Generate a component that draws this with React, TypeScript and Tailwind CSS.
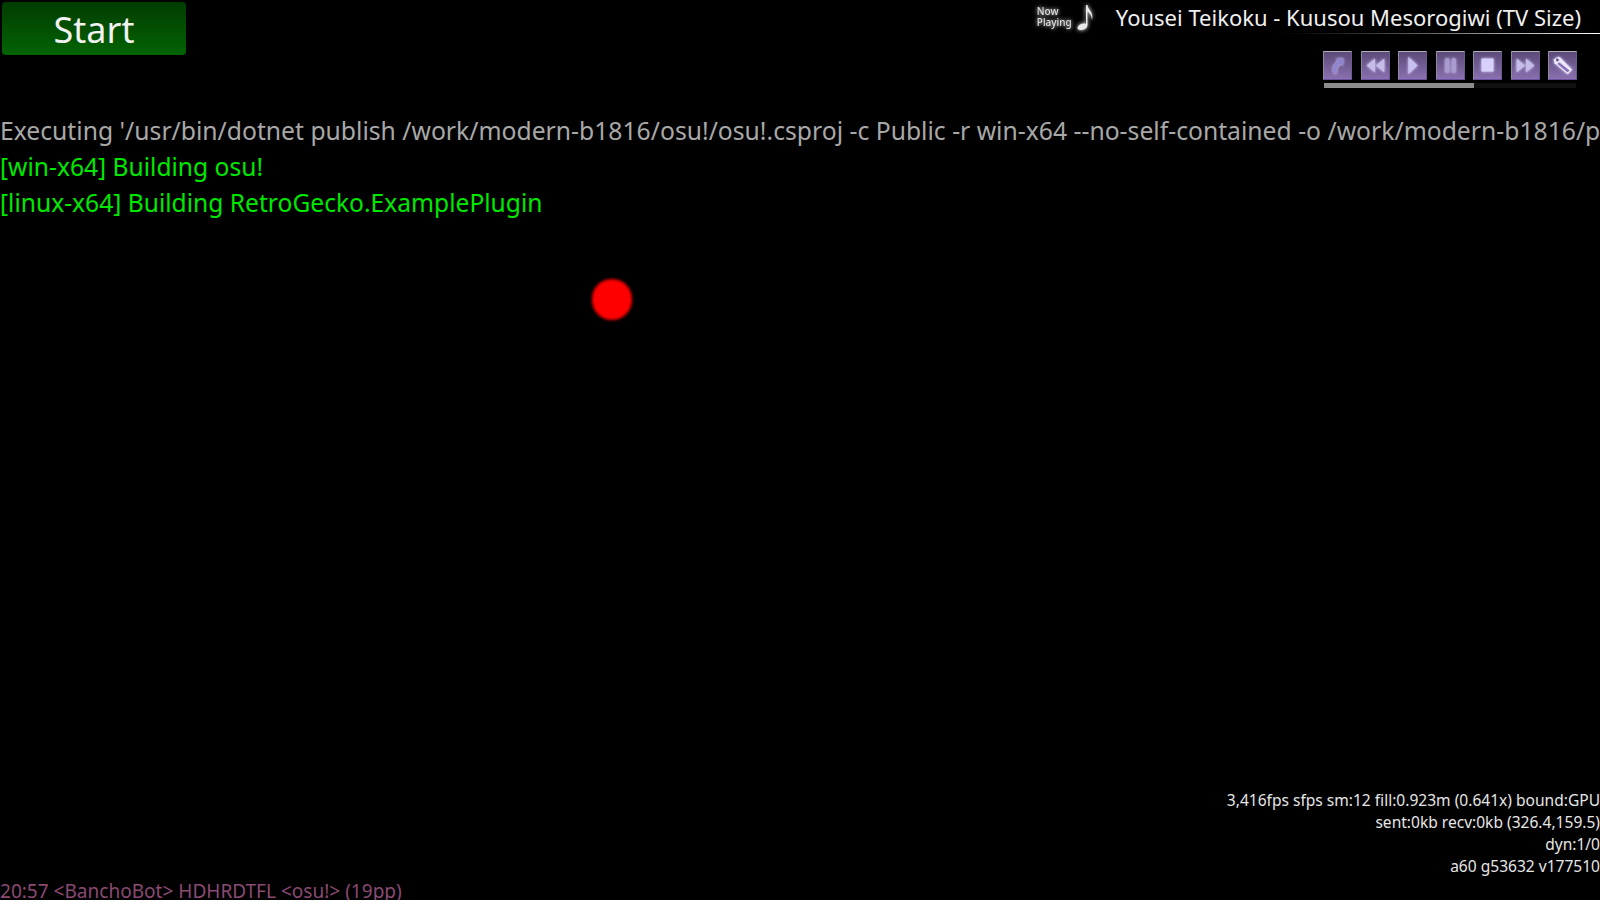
const font = { fontFamily: '"Noto Sans", sans-serif' };

function PlayerButton({ children }: { children: React.ReactNode }) {
  return (
    <div className="relative flex h-[29px] w-[29px] items-center justify-center rounded-[1px] border-t border-l border-t-[#b5b0bd] border-l-[#8f8a9c] border-b border-r border-b-[#6a4fa0] border-r-[#6a5a90] bg-gradient-to-b from-[#5b4a78] to-[#8a70b0]">
      <svg viewBox="0 0 29 29" className="h-[29px] w-[29px] blur-[0.7px] drop-shadow-[0_0_1.5px_#d8d2fb]">
        {children}
      </svg>
    </div>
  );
}

function NowPlaying() {
  return (
    <div className="flex items-center gap-[3px] mr-[21px]">
      <div className="flex flex-col text-[10px] leading-[11px] font-medium text-[#dcdcdc] blur-[0.4px] [text-shadow:0_0_4px_#ffffff]">
        <span>Now</span>
        <span>Playing</span>
      </div>
      <svg viewBox="0 0 20 28" className="h-[28px] w-[20px] blur-[0.4px] drop-shadow-[0_0_2px_#ffffff]">
        <path d="M11 2 L12.5 2 C13 7 19 9 17 17 C16.5 12 14.5 10 12.5 8.5 L12.5 22 C12.5 25 9 27 5.5 27 C2 27 2 24.5 3.5 23 C6 20.5 9 20 11 21 Z" fill="#e8e8e8" />
      </svg>
    </div>
  );
}

export default function App() {
  return (
    <div style={font} className="flex h-[900px] w-[1600px] flex-col overflow-hidden bg-black">
      <header className="flex h-[113px] shrink-0 items-start justify-between">
        <button className="mt-[2px] ml-[2px] flex h-[53px] w-[184px] items-center justify-center rounded-[4px] bg-gradient-to-b from-[#023c02] to-[#036403] pt-[3px] text-[36px] text-[#f2f2f2]">
          Start
        </button>

        <div className="flex w-[600px] flex-col items-end">
          <div className="flex h-[33px] items-center pr-[19px]">
            <NowPlaying />
            <span className="whitespace-nowrap text-[22px] leading-[30px] text-[#f0f0f0]">
              Yousei Teikoku - Kuusou Mesorogiwi (TV Size)
            </span>
          </div>
          <div className="h-[1px] w-[350px] bg-gradient-to-r from-[#000000] to-[#ffffff]" />

          <div className="mt-[17px] mr-[23px] flex gap-[8.5px]">
            <PlayerButton>
              <path d="M11 23 C8 18 10 13 15 10 L13 7 L21 7 L20 15 L18 12.5 C14 14 13 18 14 23 Z" fill="#8f84d0" />
            </PlayerButton>
            <PlayerButton>
              <path d="M14 7 L14 22 L5 14.5 Z M24 7 L24 22 L15 14.5 Z" fill="#c5bce8" />
            </PlayerButton>
            <PlayerButton>
              <path d="M10 5 L20 14.5 L10 24 Z" fill="#c8c0f0" />
            </PlayerButton>
            <PlayerButton>
              <path d="M9 7 H13 V22 H9 Z M16 7 H20 V22 H16 Z" fill="#a99bd0" />
            </PlayerButton>
            <PlayerButton>
              <path d="M8 7 H21 V21 H8 Z" fill="#d8d2fb" />
            </PlayerButton>
            <PlayerButton>
              <path d="M5 7 L14 14.5 L5 22 Z M15 7 L24 14.5 L15 22 Z" fill="#c5bce8" />
            </PlayerButton>
            <PlayerButton>
              <path d="M5 8 L10 5 L12 6 L25 19 L20 24 L6 12 Z" fill="#ece8fa" />
              <path d="M11 11 L22 20 L20 22 L9 13 Z" fill="#8a70b8" />
              <circle cx="9" cy="8.5" r="1.6" fill="#6a5590" />
            </PlayerButton>
          </div>
          <div className="mt-[3px] mr-[24px] flex h-[5px] w-[252px] bg-[#101010]">
            <div className="h-full w-[150px] bg-[#8c8c8c]" />
          </div>
        </div>
      </header>

      <main className="flex flex-1 flex-col text-[24.6px] leading-[36px] whitespace-nowrap">
        <p className="text-[24.71px] text-[#a8a8a8]">
          Executing '/usr/bin/dotnet publish /work/modern-b1816/osu!/osu!.csproj -c Public -r win-x64 --no-self-contained -o /work/modern-b1816/p
        </p>
        <p className="text-[#00e800]">[win-x64] Building osu!</p>
        <p className="text-[#00e800]">[linux-x64] Building RetroGecko.ExamplePlugin</p>
        <div className="ml-[592px] mt-[58px] h-[41px] w-[40px] rounded-full bg-[#ff0000] blur-[1.5px]" />
      </main>

      <footer className="-mb-[3px] flex items-end justify-between whitespace-nowrap">
        <p className="text-[19.05px] leading-[24px] text-[#8a4a72]">
          20:57 &lt;BanchoBot&gt; HDHRDTFL &lt;osu!&gt; (19pp)
        </p>
        <div className="mb-[26px] flex flex-col items-end text-[15.55px] leading-[22px] text-[#e6e6e6]">
          <span>3,416fps sfps sm:12 fill:0.923m (0.641x) bound:GPU</span>
          <span>sent:0kb recv:0kb (326.4,159.5)</span>
          <span>dyn:1/0</span>
          <span>a60 g53632 v177510</span>
        </div>
      </footer>
    </div>
  );
}
